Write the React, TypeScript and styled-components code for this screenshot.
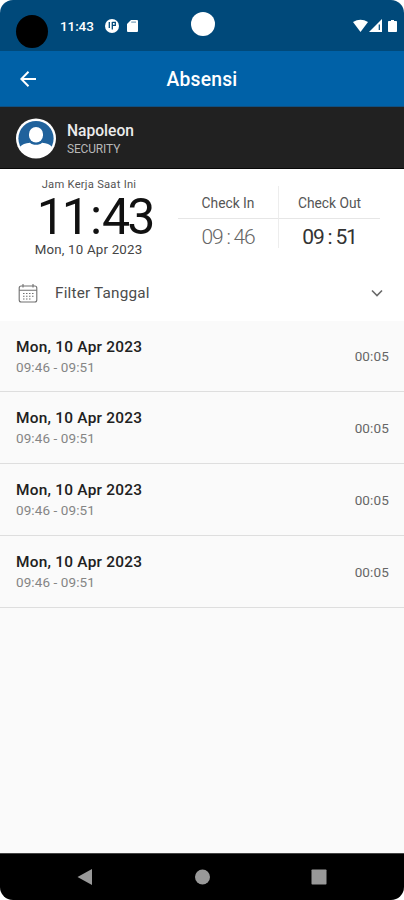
import React from "react";
import styled, { createGlobalStyle } from "styled-components";

const GlobalStyle = createGlobalStyle`
  * { box-sizing: border-box; }
  body { margin: 0; background: #fff; font-family: Roboto, "Liberation Sans", sans-serif; }
  svg { display: block; flex: none; }
`;

const Screen = styled.div`
  width: 404px;
  height: 900px;
  display: flex;
  flex-direction: column;
  background: #fafafa;
  border-radius: 13px;
  overflow: hidden;
`;

const StatusBar = styled.header`
  height: 51px;
  flex: none;
  display: grid;
  grid-template-columns: 191px 24px 1fr;
  align-items: start;
  background: #00497a;
  color: #fff;
`;

const StatusLeft = styled.div`
  display: flex;
  padding: 15px 0 0 16px;
`;

const Camera = styled.div`
  width: 32px;
  height: 33px;
  border-radius: 50%;
  background: #000;
`;

const StatusTime = styled.span`
  width: 46px;
  margin-left: 12px;
  font-size: 13.5px;
  line-height: 23px;
  font-weight: 500;
  letter-spacing: -0.1px;
`;

const StatusIcon = styled.svg`
  margin: 4px 9px 0 -1px;
`;

const Lens = styled.div`
  width: 24px;
  height: 24px;
  margin-top: 12px;
  border-radius: 50%;
  background: #fff;
`;

const StatusRight = styled.div`
  display: flex;
  justify-content: flex-end;
  padding: 19px 6px 0 0;
`;

const AppBar = styled.nav`
  height: 56px;
  flex: none;
  display: grid;
  grid-template-columns: 56px 1fr 56px;
  align-items: center;
  background: #0061a7;
  border-bottom: 1px solid #104f80;
  color: #fff;
`;

const BackButton = styled.button`
  display: flex;
  justify-content: center;
  padding: 0;
  border: 0;
  background: none;
  color: inherit;
`;

const Title = styled.h1`
  margin: 2px 0 0;
  text-align: center;
  font-size: 19.3px;
  font-weight: 500;
  letter-spacing: 0.2px;
`;

const Profile = styled.section`
  height: 62px;
  flex: none;
  display: flex;
  align-items: center;
  gap: 11px;
  padding: 1px 0 0 16px;
  background: #212121;
  border-bottom: 1px solid #080808;
`;

const ProfileName = styled.div`
  padding-top: 2px;
  font-size: 15.6px;
  line-height: 19px;
  font-weight: 500;
  color: #ececec;
`;

const ProfileRole = styled.div`
  font-size: 11.9px;
  line-height: 16px;
  letter-spacing: -0.1px;
  color: #b8b8b8;
`;

const Summary = styled.section`
  height: 96px;
  flex: none;
  display: flex;
  background: #fff;
`;

const Now = styled.div`
  width: 178px;
  display: flex;
  flex-direction: column;
  align-items: center;
  padding-top: 8px;
`;

const NowLabel = styled.div`
  font-size: 11.2px;
  line-height: 15px;
  letter-spacing: 0.25px;
  color: #555;
`;

const Clock = styled.time`
  height: 49px;
  padding-left: 11px;
  font-size: 50px;
  line-height: 51px;
  letter-spacing: -3px;
  color: #111;
`;

const Colon = styled.span<{ $gap: number }>`
  margin: 0 ${(p) => p.$gap}px;
`;

const NowDate = styled.div`
  padding-right: 1px;
  font-size: 13.3px;
  line-height: 17px;
  letter-spacing: 0.2px;
  color: #444;
`;

const Checks = styled.div`
  width: 203px;
  height: 62px;
  margin-top: 17px;
  display: grid;
  grid-template-columns: 100px 102px;
  grid-template-rows: 33px 29px;
`;

const CheckCell = styled.div<{ $right?: boolean; $bottom?: boolean }>`
  display: flex;
  justify-content: center;
  align-items: center;
  padding-top: 2px;
  border-left: ${(p) => (p.$right ? "1px solid #ededed" : "0")};
  border-bottom: ${(p) => (p.$bottom ? "0" : "1px solid #e6e6e6")};
  font-size: 13.8px;
  color: #555;
`;

const CheckTime = styled.time<{ $strong?: boolean }>`
  padding-top: 4px;
  font-size: 21px;
  line-height: 24px;
  font-weight: ${(p) => (p.$strong ? 400 : 300)};
  letter-spacing: -1.2px;
  color: ${(p) => (p.$strong ? "#333" : "#666")};
`;

const Filter = styled.button`
  height: 56px;
  flex: none;
  display: flex;
  align-items: center;
  padding: 0 19px 0 18px;
  border: 0;
  background: #fff;
  font-family: inherit;
`;

const FilterLabel = styled.span`
  flex: 1;
  margin-left: 17px;
  text-align: left;
  font-size: 15.3px;
  letter-spacing: 0.2px;
  color: #4c4c4c;
`;

const List = styled.ul`
  flex: 1;
  margin: 0;
  padding: 0;
  list-style: none;
`;

const Row = styled.li`
  height: 72px;
  display: flex;
  align-items: center;
  justify-content: space-between;
  padding: 0 15px 0 16px;
  border-bottom: 1px solid #dedede;
  &:first-child { height: 71px; }
`;

const RowDate = styled.div`
  font-size: 15.4px;
  line-height: 22px;
  font-weight: 500;
  letter-spacing: 0.25px;
  color: #202020;
`;

const RowRange = styled.div`
  font-size: 13.5px;
  line-height: 19px;
  letter-spacing: 0.1px;
  color: #858585;
`;

const RowDuration = styled.span`
  font-size: 13.5px;
  letter-spacing: 0.15px;
  color: #666;
`;

const NavBar = styled.footer`
  height: 47px;
  flex: none;
  display: grid;
  grid-template-columns: repeat(3, 117px);
  justify-content: center;
  justify-items: center;
  align-items: center;
  background: #000;
  border-top: 1px solid #444;
`;

const rows = Array.from({ length: 4 }, (_, id) => ({
  id,
  date: "Mon, 10 Apr 2023",
  range: "09:46 - 09:51",
  duration: "00:05",
}));

const Avatar = () => (
  <svg width="40" height="41" viewBox="0 0 40 41">
    <circle cx="20" cy="20.5" r="20" fill="#fff" />
    <circle cx="20" cy="20.5" r="17.6" fill="#20629c" />
    <path d="M4 29q3-4 10-4.300c2.300 2.700 9.700 2.700 12 0q7 .3 10 4.300A17.800 17.800 0 0 1 4 29z" fill="#fff" />
    <rect x="12" y="8" width="16" height="17.500" rx="8" fill="#20629c" />
    <rect x="13" y="9" width="14" height="15.500" rx="7" fill="#fff" />
  </svg>
);

const Calendar = () => (
  <svg width="20" height="20" viewBox="0 0 20 20" fill="none" stroke="#707070" strokeWidth="1.1">
    <rect x="1.200" y="3" width="17.600" height="16" rx="2" />
    <path d="M1.200 7.300h17.600M5 1v3.500M15 1v3.500" />
    <path d="M5 10.500h11M5 13.300h11M5 16h9" strokeDasharray="1.500 1.500" />
  </svg>
);

export default function App() {
  return (
    <>
      <GlobalStyle />
      <Screen>
        <StatusBar>
          <StatusLeft>
            <Camera />
            <StatusTime>11:43</StatusTime>
            <StatusIcon width="14" height="14" viewBox="0 0 14 14">
              <circle cx="7" cy="7" r="7" fill="#fff" />
              <path d="M4.300 3v6M7.300 3v7.500M7.300 3.400h3v3H7.300" fill="none" stroke="#00497a" strokeWidth="1.300" />
            </StatusIcon>
            <StatusIcon width="11" height="14" viewBox="0 0 11 14">
              <path d="M4 1h6a1 1 0 0 1 1 1v10a1 1 0 0 1-1 1H1a1 1 0 0 1-1-1V5z" fill="#fff" />
              <path d="M4.200 3.200h4.800" stroke="#7fa4bd" strokeWidth="1.200" />
            </StatusIcon>
          </StatusLeft>
          <Lens />
          <StatusRight>
            <svg width="45" height="14" viewBox="0 0 45 14" fill="#fff">
              <path d="M0 3Q7.500-1.500 15 3L7.500 13z" />
              <path d="M29 0v13H16z" />
              <path d="M26.300 5.500v5.500" stroke="#00497a" strokeWidth="1.200" />
              <path d="M38 1h3v1h2.200q.8 0 .8.800v9.400q0 .8-.8.800h-7.400q-.8 0-.8-.8V2.800q0-.8.800-.8H38z" />
            </svg>
          </StatusRight>
        </StatusBar>

        <AppBar>
          <BackButton aria-label="Kembali">
            <svg width="16" height="16" viewBox="0 0 16 16" fill="none" stroke="#fff" strokeWidth="2">
              <path d="M16 8H1.500M8.500.8L1.300 8l7.200 7.200" />
            </svg>
          </BackButton>
          <Title>Absensi</Title>
        </AppBar>

        <Profile>
          <Avatar />
          <div>
            <ProfileName>Napoleon</ProfileName>
            <ProfileRole>SECURITY</ProfileRole>
          </div>
        </Profile>

        <Summary>
          <Now>
            <NowLabel>Jam Kerja Saat Ini</NowLabel>
            <Clock>11<Colon $gap={3}>:</Colon>43</Clock>
            <NowDate>Mon, 10 Apr 2023</NowDate>
          </Now>
          <Checks>
            <CheckCell>Check In</CheckCell>
            <CheckCell $right>Check Out</CheckCell>
            <CheckCell $bottom>
              <CheckTime>09<Colon $gap={4}>:</Colon>46</CheckTime>
            </CheckCell>
            <CheckCell $right $bottom>
              <CheckTime $strong>09<Colon $gap={4}>:</Colon>51</CheckTime>
            </CheckCell>
          </Checks>
        </Summary>

        <Filter>
          <Calendar />
          <FilterLabel>Filter Tanggal</FilterLabel>
          <svg width="16" height="16" viewBox="0 0 16 16" fill="none" stroke="#696969" strokeWidth="1.600">
            <path d="M3 5.500l5 5 5-5" />
          </svg>
        </Filter>

        <List>
          {rows.map((row) => (
            <Row key={row.id}>
              <div>
                <RowDate>{row.date}</RowDate>
                <RowRange>{row.range}</RowRange>
              </div>
              <RowDuration>{row.duration}</RowDuration>
            </Row>
          ))}
        </List>

        <NavBar>
          <svg width="16" height="16" viewBox="0 0 16 16"><path d="M15 0v16L.5 8z" fill="#999" /></svg>
          <svg width="16" height="16" viewBox="0 0 16 16"><circle cx="8.500" cy="8" r="7.500" fill="#999" /></svg>
          <svg width="16" height="16" viewBox="0 0 16 16"><rect x=".5" y=".5" width="15" height="15" rx=".8" fill="#999" /></svg>
        </NavBar>
      </Screen>
    </>
  );
}
